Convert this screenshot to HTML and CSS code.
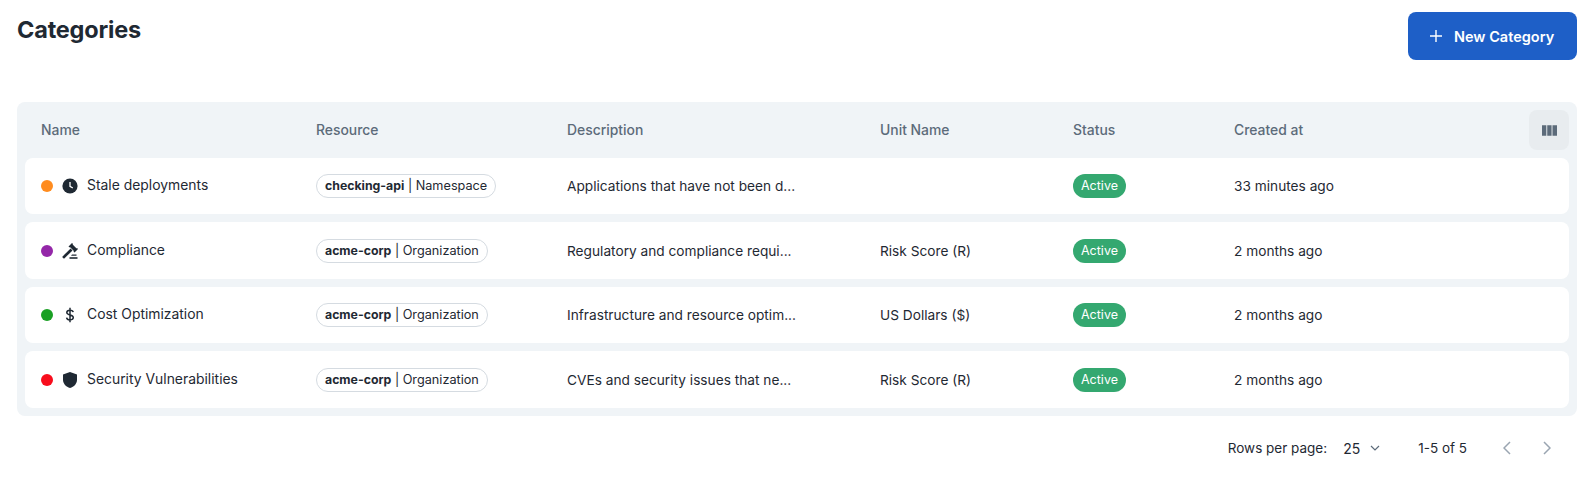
FILE: index.html
```html
<!DOCTYPE html>
<html lang="en">
<head>
<meta charset="utf-8">
<title>Categories</title>
<link rel="stylesheet" href="styles.css">
</head>
<body>
<main class="page">
  <header class="top">
    <h1 class="title">Categories</h1>
    <button class="new-btn" type="button">
      <svg class="plus" viewBox="0 0 12 12"><path d="M6 0v12M0 6h12"/></svg>
      <span>New Category</span>
    </button>
  </header>

  <section class="table">
    <div class="head cols">
      <div>Name</div><div>Resource</div><div>Description</div><div>Unit Name</div><div>Status</div><div>Created at</div>
      <button class="col-btn" type="button" aria-label="Columns">
        <svg viewBox="0 0 16 12"><path d="M0 1h4.600v11H0zM5.600 1h4.600v11H5.600zM11.200 1H16v11h-4.800z"/></svg>
      </button>
    </div>

    <div class="row cols">
      <div class="name"><span class="dot orange"></span>
        <svg class="ico" viewBox="0 0 16 16"><circle cx="8" cy="8" r="7.600"/><path class="hand" d="M8 4v4.400l2.800 1.600"/></svg>
        <span class="label">Stale deployments</span></div>
      <div><span class="chip"><b>checking-api</b> | Namespace</span></div>
      <div>Applications that have not been d...</div>
      <div></div>
      <div><span class="badge">Active</span></div>
      <div>33 minutes ago</div>
    </div>

    <div class="row cols">
      <div class="name"><span class="dot purple"></span>
        <svg class="ico" viewBox="0 0 16 16"><path d="M10 0 11 1 10.600 1.400 14.600 5.400 15 5 16 6 12.500 9.500 11.500 8.500 11.900 8.100 7.900 4.100 7.500 4.500 6.500 3.500z"/><path d="M8.600 5.500 10.500 7.400 2 15.800 0.100 13.900z"/><path d="M7.500 14.200h8v1.600h-8z"/><path d="M10 11.500h4.500v1.300H9z"/></svg>
        <span class="label">Compliance</span></div>
      <div><span class="chip"><b>acme-corp</b> | Organization</span></div>
      <div>Regulatory and compliance requi...</div>
      <div>Risk Score (R)</div>
      <div><span class="badge">Active</span></div>
      <div>2 months ago</div>
    </div>

    <div class="row cols">
      <div class="name"><span class="dot green"></span>
        <svg class="ico" viewBox="0 0 16 16"><path class="line" d="M11.200 5.200C11 3.900 9.800 3.200 8 3.200c-1.900 0-3.200.9-3.200 2.300 0 1.600 1.500 2 3.200 2.500 1.800.5 3.300 1 3.300 2.600 0 1.400-1.300 2.300-3.300 2.300-1.900 0-3.200-.8-3.400-2.200M8 .8v14.400"/></svg>
        <span class="label">Cost Optimization</span></div>
      <div><span class="chip"><b>acme-corp</b> | Organization</span></div>
      <div>Infrastructure and resource optim...</div>
      <div>US Dollars ($)</div>
      <div><span class="badge">Active</span></div>
      <div>2 months ago</div>
    </div>

    <div class="row cols">
      <div class="name"><span class="dot red"></span>
        <svg class="ico" viewBox="0 0 16 16"><path d="M8 0 15 2.400v5.400C15 11.800 12 14.800 8 16 4 14.800 1 11.800 1 7.800V2.400z"/></svg>
        <span class="label">Security Vulnerabilities</span></div>
      <div><span class="chip"><b>acme-corp</b> | Organization</span></div>
      <div>CVEs and security issues that ne...</div>
      <div>Risk Score (R)</div>
      <div><span class="badge">Active</span></div>
      <div>2 months ago</div>
    </div>
  </section>

  <footer class="pager">
    <span class="rows-label">Rows per page:</span>
    <span class="rows-value">25</span>
    <svg class="caret" viewBox="0 0 10 6"><path d="M1 1l4 4 4-4"/></svg>
    <span class="range">1-5 of 5</span>
    <svg class="nav prev" viewBox="0 0 8 14"><path d="M7 1 1 7l6 6"/></svg>
    <svg class="nav next" viewBox="0 0 8 14"><path d="M1 1l6 6-6 6"/></svg>
  </footer>
</main>
</body>
</html>
```

FILE: styles.css
```css
* { box-sizing: border-box; }
html, body { margin: 0; background: #fff; }
body {
  font-family: "Inter", "Liberation Sans", sans-serif;
  font-size: 13.7px;
  color: #1f2933;
}
.page { padding: 12px 15px 0 17px; }

.top { display: flex; justify-content: space-between; align-items: flex-start; height: 90px; }
.title { margin: 2px 0 0; font-size: 23.500px; line-height: 31px; font-weight: 700; letter-spacing: -0.2px; color: #1f2933; }
.new-btn {
  display: flex; align-items: center; gap: 12px;
  width: 169px; height: 48px; padding: 0 0 0 22px;
  border: 0; border-radius: 8px;
  background: #1e5fc7; color: #fff;
  font: 600 14.500px "Inter", "Liberation Sans", sans-serif;
}
.plus { width: 12px; height: 12px; fill: none; stroke: #fff; stroke-width: 1.400; }

.table { background: #f0f4f7; border-radius: 8px; padding: 0 8px 8px; height: 314px; }
.cols {
  display: grid;
  grid-template-columns: 275px 251px 313px 193px 161px 1fr;
  align-items: center;
}
.head { position: relative; height: 55.900px; padding-left: 16px; color: #5c6b7a; font-weight: 500; font-size: 13.900px; }
.col-btn {
  position: absolute; right: 0; top: 8px;
  width: 40px; height: 40px; padding: 0;
  display: flex; align-items: center; justify-content: center;
  border: 0; border-radius: 8px; background: #e8ecef;
}
.col-btn svg { width: 15px; height: 12px; fill: #5c6b7a; }

.row { height: 56.500px; margin-bottom: 8px; padding-left: 16px; background: #fff; border-radius: 8px; }
.row:last-child { margin-bottom: 0; }

.name { display: flex; align-items: center; }
.label { font-size: 13.900px; padding-bottom: 1.400px; }
.dot { width: 12px; height: 12px; border-radius: 50%; margin-right: 9px; }
.orange { background: #ff8c1f; }
.purple { background: #9427a8; }
.green { background: #1aa024; }
.red { background: #f80d1c; }
.ico { width: 16px; height: 16px; margin-right: 9px; fill: #1f2933; }
.ico .hand { fill: none; stroke: #fff; stroke-width: 1.300; }
.ico .line { fill: none; stroke: #1f2933; stroke-width: 1.500; }

.chip {
  display: inline-block; height: 24px; padding: 0 8px;
  border: 1px solid #d5dbe1; border-radius: 12px;
  font-size: 12.700px; line-height: 22px; white-space: nowrap;
}
.chip b { font-size: 12.300px; font-weight: 700; }
.badge {
  display: inline-block; height: 24px; padding: 0 8px;
  border-radius: 12px; background: #34a870; color: #fff;
  font-size: 12.500px; line-height: 24px;
}

.pager { display: flex; justify-content: flex-end; align-items: center; height: 64px; padding-right: 26px; font-size: 13.500px; }
.rows-label { margin-right: 16px; }
.rows-value { margin-right: 10px; font-size: 14px; }
.caret { width: 10px; height: 6px; fill: none; stroke: #5c6b7a; stroke-width: 1.200; margin-right: 38px; }
.range { margin-right: 36px; }
.nav { width: 8px; height: 14px; fill: none; stroke: #9aa5b1; stroke-width: 1.500; }
.prev { margin-right: 32px; }
```
